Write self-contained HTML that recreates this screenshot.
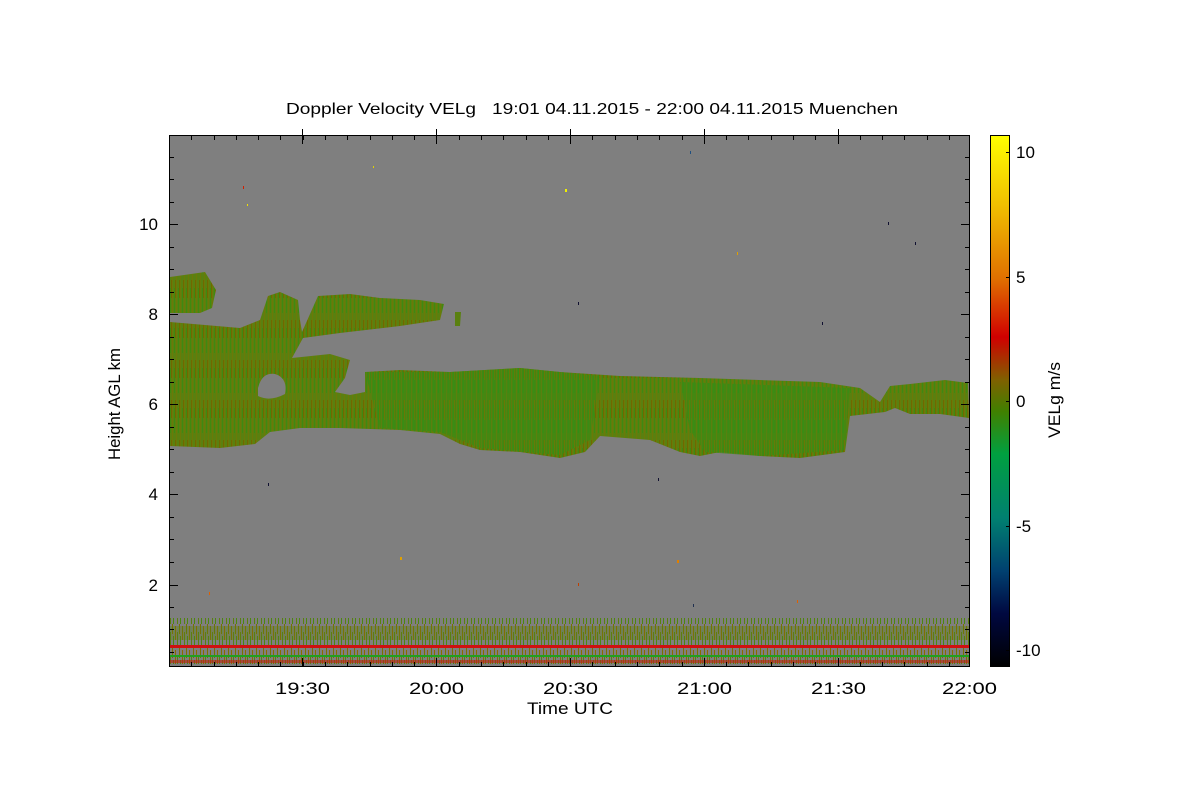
<!DOCTYPE html>
<html><head><meta charset="utf-8"><style>
html,body{margin:0;padding:0;background:#fff;width:1200px;height:800px;overflow:hidden}
text{font-family:"Liberation Sans",sans-serif;fill:#000}
</style></head><body>
<svg width="1200" height="800" viewBox="0 0 1200 800" xmlns="http://www.w3.org/2000/svg">
<defs>
<linearGradient id="cb" x1="0" y1="0" x2="0" y2="1">
<stop offset="0" stop-color="#ffff00"/>
<stop offset="0.13" stop-color="#f0c000"/>
<stop offset="0.27" stop-color="#e07000"/>
<stop offset="0.38" stop-color="#d00000"/>
<stop offset="0.46" stop-color="#806000"/>
<stop offset="0.52" stop-color="#408000"/>
<stop offset="0.6" stop-color="#00a040"/>
<stop offset="0.72" stop-color="#008070"/>
<stop offset="0.82" stop-color="#004070"/>
<stop offset="0.9" stop-color="#000840"/>
<stop offset="1" stop-color="#000000"/>
</linearGradient>
<pattern id="st" width="4" height="40" patternUnits="userSpaceOnUse">
<rect width="4" height="40" fill="#5a8010"/>
<rect x="0" width="1" height="40" fill="#6b7a08"/>
<rect x="2" y="8" width="1" height="25" fill="#3f8a10"/>
<rect x="3" y="0" width="1" height="18" fill="#706800"/>
</pattern>
<pattern id="gst" width="5" height="40" patternUnits="userSpaceOnUse">
<rect width="5" height="40" fill="#3e8a12"/>
<rect x="1" width="1" height="40" fill="#5a8010"/>
<rect x="3" y="5" width="1" height="28" fill="#2f9018"/>
<rect x="4" y="0" width="1" height="20" fill="#6a7806"/>
</pattern>
<pattern id="bl" width="7" height="24" patternUnits="userSpaceOnUse">
<rect x="0" y="2" width="1" height="14" fill="#8a6a00"/>
<rect x="2" y="8" width="1" height="16" fill="#5a8010"/>
<rect x="4" y="0" width="1" height="10" fill="#7a7000"/>
<rect x="5" y="12" width="1" height="12" fill="#4a8810"/>
</pattern>
</defs>
<text x="286" y="114" font-size="16" textLength="612" lengthAdjust="spacingAndGlyphs" xml:space="preserve">Doppler Velocity VELg   19:01 04.11.2015 - 22:00 04.11.2015 Muenchen</text>
<rect x="169" y="135" width="801" height="532" fill="#7f7f7f"/>
<path d="M170 277 L205 272 L216 290 L212 308 L200 313 L170 313 Z" fill="url(#st)"/>
<path d="M170 322 L240 328 L260 320 L268 296 L280 292 L298 300 L300 320 L302 332 L318 296 L350 294 L380 298 L420 300 L444 304 L440 320 L400 326 L340 333 L303 338 L292 358 L330 354 L350 360 L345 378 L335 392 L350 395 L365 392 L365 372 L400 370 L450 372 L520 368 L560 372 L620 376 L700 378 L760 380 L820 382 L860 388 L880 402 L890 386 L910 384 L945 380 L968 383 L969 418 L940 414 L910 414 L895 408 L885 412 L850 416 L845 452 L800 458 L760 456 L720 452 L700 456 L680 452 L650 440 L600 436 L585 452 L560 458 L520 452 L480 450 L460 444 L440 434 L400 430 L340 428 L300 428 L270 432 L255 444 L220 448 L170 446 Z M258 388 Q262 372 275 374 Q288 378 285 394 Q270 402 258 396 Z" fill="url(#st)" fill-rule="evenodd"/>
<path d="M365 372 L450 372 L520 368 L600 376 L590 440 L560 455 L480 448 L440 432 L380 428 Z" fill="url(#gst)" opacity="0.8"/>
<path d="M680 382 L850 388 L845 450 L760 456 L705 452 L690 430 Z" fill="url(#gst)" opacity="0.8"/>
<path d="M455 312 L461 312 L460 326 L455 326Z" fill="#5a8010"/>
<rect x="170" y="618" width="799" height="46" fill="url(#bl)"/>
<rect x="170" y="626" width="799" height="14" fill="url(#st)" opacity="0.35"/>
<rect x="170" y="648" width="799" height="16" fill="url(#bl)"/>
<rect x="170" y="645" width="799" height="3" fill="#d01010"/>
<rect x="170" y="655" width="799" height="2" fill="#20a020"/>
<rect x="170" y="660" width="799" height="3" fill="#c02010" opacity="0.6"/>
<g>
<rect x="243" y="186" width="1" height="3" fill="#d02000"/><rect x="247" y="204" width="1" height="2" fill="#f0e000"/>
<rect x="373" y="166" width="1" height="2" fill="#e0d000"/><rect x="565" y="189" width="2" height="3" fill="#f0f000"/>
<rect x="690" y="151" width="1" height="3" fill="#205080"/><rect x="888" y="222" width="1" height="3" fill="#101030"/>
<rect x="915" y="242" width="1" height="3" fill="#101030"/><rect x="737" y="252" width="1" height="3" fill="#e0a000"/>
<rect x="578" y="302" width="1" height="3" fill="#101030"/><rect x="822" y="322" width="1" height="3" fill="#101030"/>
<rect x="268" y="483" width="1" height="3" fill="#101030"/><rect x="658" y="478" width="1" height="3" fill="#101030"/>
<rect x="400" y="557" width="2" height="3" fill="#e0a000"/><rect x="578" y="583" width="1" height="3" fill="#c04000"/>
<rect x="677" y="560" width="2" height="3" fill="#e08000"/><rect x="693" y="604" width="1" height="3" fill="#203050"/>
<rect x="797" y="600" width="1" height="3" fill="#e06000"/><rect x="209" y="592" width="1" height="3" fill="#e06000"/>
</g>
<rect x="169.5" y="135.5" width="800" height="531" fill="none" stroke="#000" stroke-width="1"/>
<g stroke="#000" stroke-width="1">
<path d="M169 224.5h9M169 314.5h9M169 404.5h9M169 494.5h9M169 585.5h9M970 224.5h-9M970 314.5h-9M970 404.5h-9M970 494.5h-9M970 585.5h-9"/>
<path d="M169 157.5h5M169 179.5h5M169 202.5h5M169 247.5h5M169 269.5h5M169 292.5h5M169 337.5h5M169 359.5h5M169 382.5h5M169 427.5h5M169 449.5h5M169 472.5h5M169 517.5h5M169 539.5h5M169 562.5h5M169 607.5h5M169 629.5h5M169 652.5h5
M970 157.5h-5M970 179.5h-5M970 202.5h-5M970 247.5h-5M970 269.5h-5M970 292.5h-5M970 337.5h-5M970 359.5h-5M970 382.5h-5M970 427.5h-5M970 449.5h-5M970 472.5h-5M970 517.5h-5M970 539.5h-5M970 562.5h-5M970 607.5h-5M970 629.5h-5M970 652.5h-5"/>
<path d="M302.5 667v-9M436.5 667v-9M570.5 667v-9M704.5 667v-9M838.5 667v-9M969.5 667v-9M302.5 135v9M436.5 135v9M570.5 135v9M704.5 135v9M838.5 135v9M969.5 135v9"/>
<path d="M302.5 135v-6M436.5 135v-6M570.5 135v-6M704.5 135v-6M838.5 135v-6"/>
</g>
<g id="mt" stroke="#000" stroke-width="1"></g>
<g font-size="17" text-anchor="end">
<text x="158" y="230">10</text><text x="158" y="320">8</text><text x="158" y="410">6</text><text x="158" y="500">4</text><text x="158" y="591">2</text>
</g>
<g font-size="17">
<text x="275" y="694" textLength="55" lengthAdjust="spacingAndGlyphs">19:30</text>
<text x="409" y="694" textLength="55" lengthAdjust="spacingAndGlyphs">20:00</text>
<text x="543" y="694" textLength="55" lengthAdjust="spacingAndGlyphs">20:30</text>
<text x="677" y="694" textLength="55" lengthAdjust="spacingAndGlyphs">21:00</text>
<text x="811" y="694" textLength="55" lengthAdjust="spacingAndGlyphs">21:30</text>
<text x="942" y="694" textLength="55" lengthAdjust="spacingAndGlyphs">22:00</text>
<text x="527" y="714" textLength="86" lengthAdjust="spacingAndGlyphs">Time UTC</text>
</g>
<text transform="translate(120 460) rotate(-90)" font-size="17" textLength="112" lengthAdjust="spacingAndGlyphs">Height AGL km</text>
<rect x="990" y="135" width="20" height="532" fill="url(#cb)"/>
<rect x="990.5" y="135.5" width="19" height="531" fill="none" stroke="#000"/>
<g stroke="#000"><path d="M1010 152.5h-4M1010 277.5h-4M1010 401.5h-4M1010 526.5h-4M1010 650.5h-4"/></g>
<g font-size="17"><text x="1016" y="158">10</text><text x="1016" y="283">5</text><text x="1016" y="407">0</text><text x="1016" y="532">-5</text><text x="1016" y="656">-10</text></g>
<text transform="translate(1060 438) rotate(-90)" font-size="17" textLength="76" lengthAdjust="spacingAndGlyphs">VELg m/s</text>
</svg>
<script>
var g=document.getElementById('mt'),s='';
for(var i=0;i<37;i++){var x=169+i*(800/35.9);x=Math.round(x)+0.5;if(x>969)break;s+='M'+x+' 667v-5M'+x+' 135v5';}
g.innerHTML='<path d="'+s+'"/>';
</script>
</body></html>
